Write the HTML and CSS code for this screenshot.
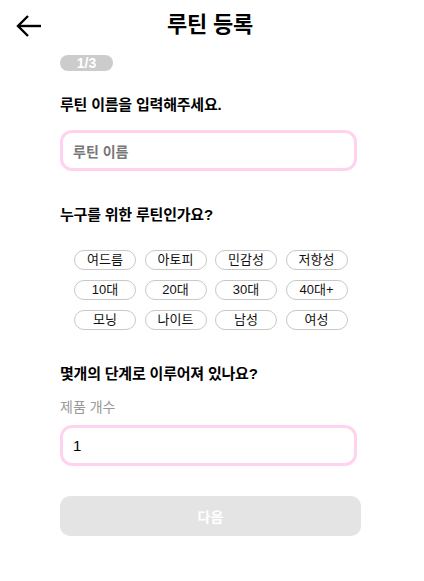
FILE: index.html
```html
<!DOCTYPE html>
<html lang="ko">
<head>
<meta charset="utf-8">
<link rel="stylesheet" href="styles.css">
</head>
<body>
<div class="page">
  <header class="header">
    <button class="back" aria-label="뒤로">
      <svg width="26" height="22" viewBox="0 0 26 22" fill="none" stroke="#000" stroke-width="2.4" stroke-linecap="butt">
        <path d="M2 11H25"/>
        <path d="M12 1L2 11L12 21"/>
      </svg>
    </button>
    <h1 class="title">루틴 등록</h1>
    <span></span>
  </header>
  <main class="content">
    <div class="badge">1/3</div>
    <h2 class="q q-first">루틴 이름을 입력해주세요.</h2>
    <div class="field field-first"><span class="placeholder">루틴 이름</span></div>
    <h2 class="q q-second">누구를 위한 루틴인가요?</h2>
    <div class="chips">
      <span class="chip">여드름</span>
      <span class="chip">아토피</span>
      <span class="chip">민감성</span>
      <span class="chip">저항성</span>
      <span class="chip">10대</span>
      <span class="chip">20대</span>
      <span class="chip">30대</span>
      <span class="chip">40대+</span>
      <span class="chip">모닝</span>
      <span class="chip">나이트</span>
      <span class="chip">남성</span>
      <span class="chip">여성</span>
    </div>
    <h2 class="q q-third">몇개의 단계로 이루어져 있나요?</h2>
    <div class="label">제품 개수</div>
    <div class="field field-second"><span class="value">1</span></div>
    <button class="next">다음</button>
  </main>
</div>
</body>
</html>
```

FILE: styles.css
```css
* { box-sizing: border-box; }
html, body { margin: 0; padding: 0; background: #fff; }
body {
  font-family: "Liberation Sans", "Noto Sans CJK KR", sans-serif;
  color: #000;
  width: 424px;
  height: 581px;
  overflow: hidden;
}
.page { display: flex; flex-direction: column; }
.header {
  height: 48px;
  display: grid;
  grid-template-columns: 1fr auto 1fr;
  align-items: center;
}
.back {
  border: 0;
  background: none;
  padding: 0;
  margin: 3px 0 0 16px;
  width: 28px;
  height: 24px;
  display: flex;
  align-items: center;
  justify-content: flex-start;
}
.title {
  margin: 0;
  font-size: 22px;
  font-weight: 700;
  line-height: 30px;
  letter-spacing: -0.2px;
  transform: translate(-2px, 1px);
}
.content {
  width: 301px;
  margin-left: 60px;
  display: flex;
  flex-direction: column;
  align-items: flex-start;
}
.badge {
  margin-top: 7px;
  width: 53px;
  height: 16px;
  border-radius: 8px;
  background: #cccccc;
  color: #fff;
  font-size: 14px;
  font-weight: 700;
  line-height: 16px;
  text-align: center;
}
.q {
  margin: 0;
  font-size: 15px;
  font-weight: 700;
  line-height: 20px;
  letter-spacing: -0.2px;
}
.q-first { margin-top: 24px; }
.q-second { margin-top: 34px; }
.q-third { margin-top: 34px; }
.field {
  width: 297px;
  height: 41px;
  border: 3px solid #ffd3f0;
  border-radius: 12px;
  display: flex;
  align-items: center;
  padding-left: 10px;
}
.field-first { margin-top: 15px; }
.field-second { margin-top: 8px; }
.placeholder {
  font-size: 14px;
  font-weight: 700;
  color: #777;
}
.value {
  font-size: 15px;
  color: #000;
}
.chips {
  margin-top: 25px;
  margin-left: 14px;
  display: grid;
  grid-template-columns: repeat(4, 62px);
  column-gap: 8.5px;
  row-gap: 10px;
}
.chip {
  height: 20px;
  border: 1px solid #c8c8c8;
  border-radius: 10px;
  font-size: 13px;
  line-height: 18px;
  text-align: center;
  color: #111;
}
.label {
  margin-top: 13px;
  font-size: 14px;
  line-height: 20px;
  color: #999;
}
.next {
  margin-top: 30px;
  width: 301px;
  height: 40px;
  border: 0;
  border-radius: 10px;
  background: #e4e4e4;
  color: #fff;
  font-family: inherit;
  font-size: 14px;
  font-weight: 700;
}
```
